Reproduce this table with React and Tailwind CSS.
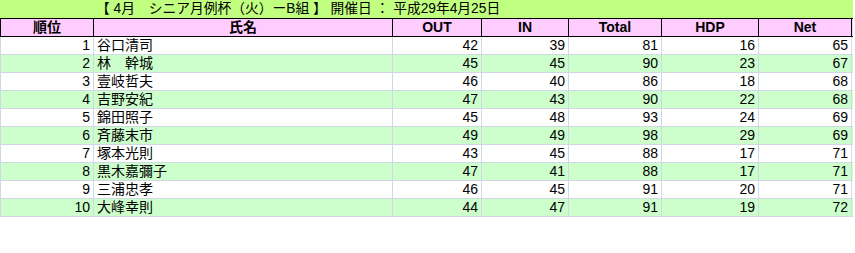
const rows = [
  [1, '谷口清司', 42, 39, 81, 16, 65],
  [2, '林　幹城', 45, 45, 90, 23, 67],
  [3, '壹岐哲夫', 46, 40, 86, 18, 68],
  [4, '吉野安紀', 47, 43, 90, 22, 68],
  [5, '錦田照子', 45, 48, 93, 24, 69],
  [6, '斉藤末市', 49, 49, 98, 29, 69],
  [7, '塚本光則', 43, 45, 88, 17, 71],
  [8, '黒木嘉彌子', 47, 41, 88, 17, 71],
  [9, '三浦忠孝', 46, 45, 91, 20, 71],
  [10, '大峰幸則', 44, 47, 91, 19, 72],
];

const cols = 'grid grid-cols-[94px_299px_89px_87px_93px_97px_93px]';
const heads = ['順位', '氏名', 'OUT', 'IN', 'Total', 'HDP', 'Net'];

export default function App() {
  return (
    <div className="w-[855px] h-[253px] bg-white text-[14px] leading-[17px] text-black font-['Liberation_Sans','Noto_Sans_CJK_JP',sans-serif]">
      <div className="w-[853px]">
        {/* title */}
        <div className="h-[18px] bg-[#c0ff80] pl-[96px] whitespace-pre text-[13.75px]">
          【 4月　シニア月例杯（火）ーB組 】 開催日 ： 平成29年4月25日
        </div>

        {/* header */}
        <div className={`${cols} h-[19px] border-y border-black bg-[#ffccff] font-bold`}>
          {heads.map((h, i) => (
            <div
              key={h}
              className={`text-center border-r border-black ${i === 0 ? 'border-l' : ''}`}
            >
              {h}
            </div>
          ))}
        </div>

        {/* data */}
        {rows.map((r, idx) => (
          <div
            key={r[0]}
            className={`${cols} h-[18px] border-b border-[#d0d7e5] ${idx % 2 ? 'bg-[#ccffcc]' : 'bg-white'}`}
          >
            {r.map((v, i) => (
              <div
                key={i}
                className={`border-r border-[#d0d7e5] ${i === 0 ? 'border-l' : ''} ${i === 1 ? 'text-left pl-[3px]' : 'text-right pr-[3px]'}`}
              >
                {v}
              </div>
            ))}
          </div>
        ))}
      </div>
    </div>
  );
}
